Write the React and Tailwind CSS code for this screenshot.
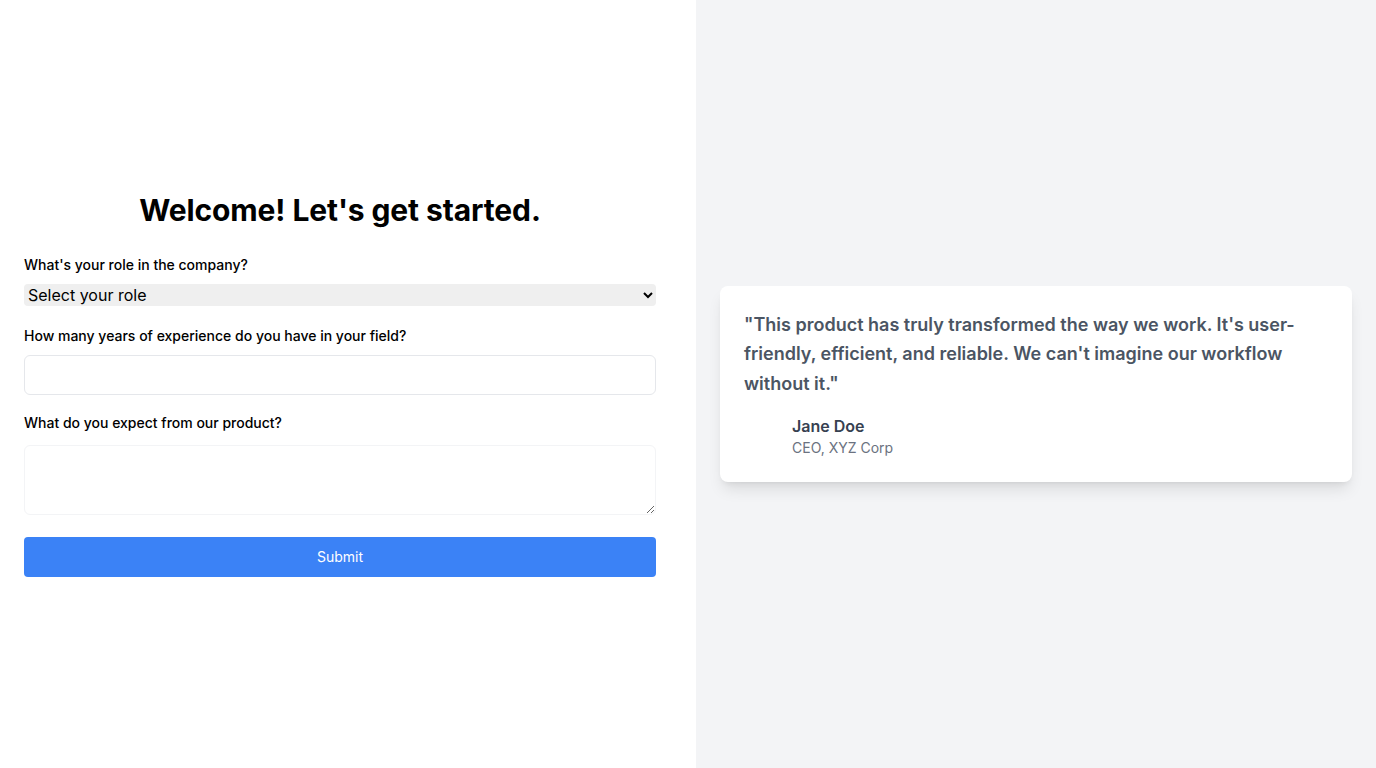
import React from 'react';

const Label = ({ children }) => (
  <label className="block text-sm font-medium text-black">{children}</label>
);

const App = () => {
  return (
    <div className="flex h-screen w-full font-['Inter',sans-serif]">
      <div className="w-[696px] shrink-0 bg-white flex items-center pl-6">
        <form className="w-[632px]" onSubmit={(e) => e.preventDefault()}>
          <h1 className="text-3xl font-bold text-black text-center mb-[27px] tracking-[-0.1px]">Welcome! Let's get started.</h1>
          <Label>What's your role in the company?</Label>
          <select className="block w-full h-[22px] mt-[9px] bg-[#efefef] rounded text-base text-black" defaultValue="">
            <option value="">Select your role</option>
            <option value="dev">Developer</option>
            <option value="pm">Product Manager</option>
            <option value="design">Designer</option>
          </select>
          <div className="mt-5">
            <Label>How many years of experience do you have in your field?</Label>
          </div>
          <input type="number" className="block w-full h-10 mt-[9px] px-3 border border-[#e5e7eb] rounded-md" />
          <div className="mt-[18px]">
            <Label>What do you expect from our product?</Label>
          </div>
          <textarea className="block w-full h-[70px] mt-3 px-3 py-2 border border-[#f3f4f6] rounded-md" />
          <button type="submit" className="block w-full h-10 bg-[#3b82f6] text-white text-sm rounded mt-[22px]">
            Submit
          </button>
        </form>
      </div>
      <div className="flex-1 bg-[#f3f4f6] flex items-center px-6">
        <div className="w-full bg-white rounded-lg shadow-lg p-6">
          <p className="text-lg font-semibold text-[#4b5563] leading-relaxed">
            "This product has truly transformed the way we work. It's user-friendly, efficient, and reliable. We can't imagine our workflow without it."
          </p>
          <div className="flex items-center mt-4">
            <div className="w-12 shrink-0" />
            <div>
              <div className="text-base font-semibold text-[#374151]">Jane Doe</div>
              <div className="text-sm text-[#6b7280]">CEO, XYZ Corp</div>
            </div>
          </div>
        </div>
      </div>
    </div>
  );
};

export default App;
